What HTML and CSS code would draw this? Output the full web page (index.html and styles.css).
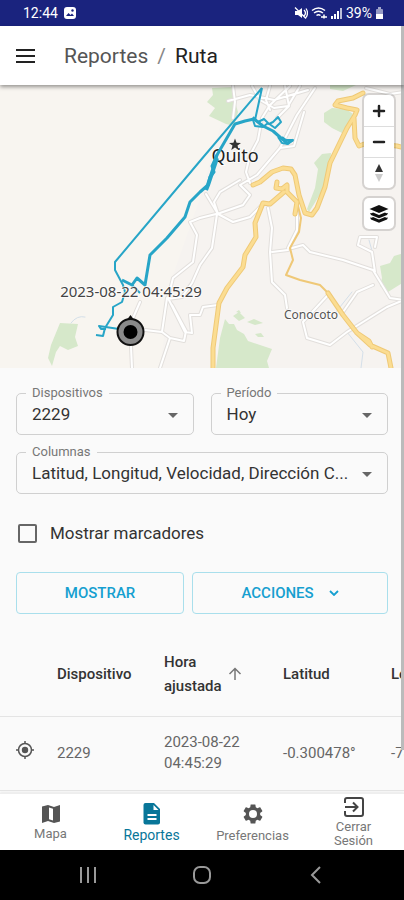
FILE: index.html
```html
<!DOCTYPE html>
<html lang="es">
<head>
<meta charset="utf-8">
<meta name="viewport" content="width=device-width, initial-scale=1">
<title>Reportes / Ruta</title>
<link rel="stylesheet" href="styles.css">
</head>
<body>
<div class="status">
  <span class="status-group">
    <span>12:44</span>
    <svg width="14" height="14" viewBox="0 0 14 14"><rect x="1" y="1" width="12" height="12" rx="3" fill="#fff"/><path d="M3 10l2.500-3 2 2 1.500-1.500 2 2.500z" fill="#1a237e"/><circle cx="9.500" cy="4.500" r="1.200" fill="#1a237e"/></svg>
  </span>
  <span class="status-group status-right">
    <svg width="14" height="14" viewBox="0 0 14 14" fill="#fff"><path d="M1 5h3l4-3v10L4 9H1z"/><path d="M10 4q3 3 0 6M12 2.500q3 4.500 0 9M1 1.500l11 11" stroke="#fff" fill="none" stroke-width="1.300"/></svg>
    <svg width="17" height="14" viewBox="0 0 17 14" fill="none" stroke="#fff" stroke-width="1.500"><path d="M1 4.500q6.500-5 13 0M3 7q4.500-3.500 9 0M5.500 9.500q2-1.500 4 0"/><path d="M10 11h6M13 8.500v4"/></svg>
    <svg width="12" height="14" viewBox="0 0 12 14" fill="#fff"><path d="M0 10h2v3H0zM3 8h2v5H3zM6 5h2v8H6z"/><path d="M9 2h2v11H9z" opacity=".7"/></svg>
    <span>39%</span>
    <svg width="9" height="14" viewBox="0 0 9 14" fill="#fff"><path d="M3 1h3v2H3z" opacity=".6"/><rect x="1" y="3" width="7" height="10" rx="1" opacity=".55"/><path d="M1 8h7v5H1z"/></svg>
  </span>
</div>

<header class="appbar">
  <button class="icon-button" aria-label="Menú"><svg width="20" height="16" viewBox="0 0 20 16"><path d="M0 2h19M0 8h19M0 14h19" stroke="#222" stroke-width="2"/></svg></button>
  <h1 class="crumbs"><a href="#">Reportes</a><span class="slash">/</span><span>Ruta</span></h1>
</header>

<main class="content">
  <section class="map">
    <svg class="map-canvas" viewBox="0 85 404 283" preserveAspectRatio="xMidYMid slice">
      <defs>
        <path id="streets" d="M233 86l2 16-2 16M290 86l-20 19-8 13-4 22-8 15-4 17 4 11M252 86l8 14 14 8 14-2 12-20M315 88l-18 27-17 33-23 27-17 10M270 86l-4 14 4 10M304 112l-10 34-14 2M285 86l4 20-12 12M228 101l22-6 24 5 34-10M366 88l24 6 14-2M240 180l-20 12-6 10 4 12 15 8 17-5 12-12M240 185l10 10-7 10-23 8-20 5-10 4 7 13-4 27-20 16-5 20 17 34 7 1-2-18 10 0 3-8 15-2M217 214l-5 34-12 17-8 18-10 14-14 2M206 194l12 20M167 298l-5 34-17-2M172 305l14 26-2 10-14-3-10 30M170 338l-8-6M140 302l-10 23 2 43M268 208l4 20-2 24 2 30 13 13 2 13M272 252l16-2M292 248l11-3 7 7 33 8 30 10 17 28 14 2M375 272l-3-20-14-7 2-8 17 0-2 10M373 285l-16 7-14 20M328 295l-25 27 4 16 23 7 17-13 40-25 17-7M297 204l0 26-9 18"/>
        <path id="highways" d="M253 185l7-3 12-10 11-4 8 1 4 6 4 20 6 18 7 2 5-7 8-21 5-24 17-35 8-13 2-5-10-2-12-3 3-4 15-3 10-5M354 118l1 20 4 8 8-3 30 3 8 2M277 182l-1 6 6 1 5-4 0 7 10 10-2 12M284 192l-14 12-7-1-8 20 1 14-11 18-2 12-16 21-8 15-6 45 0 20M328 293l15 22 14 18 13 12 18 8 3 15M357 333l12 8 3 6"/>
      </defs>
      <rect y="80" width="404" height="300" fill="#f8f5f0"/>
      <path d="M232 85h172v283H160l12-90 28-80z" fill="#f6f3f0"/>
      <g fill="#d6e8ca">
        <path d="M212 88l20-1 1 8 5 17-4 14-8-2-17-8 6-8-8-6 6-7z"/>
        <path d="M324 113l8-5 14 1 7 5-11 19-10-5-8-6z"/>
        <path d="M322 154l9-1-1 12-9 28-12 19-2-3 8-21 3-19-4-6z"/>
        <path d="M330 85h26l-13 6-13-2z"/>
        <path d="M225 319l4 5 5 0 3 6 7 4 4 7 24 8-5 12 2 7h-53l4-30z"/>
        <path d="M404 253l-10 3-4 7-10 3 2 12-2 8 8 6 16-10z"/>
        <path d="M60 323l18 1-3 13 3 9-10 4-8-4-4 6-4 14-4-8 3-13z"/>
        <path d="M233 316l6-4 6 6-6 3zM247 322l7-3 9 4-8 2zM255 334l6-1 3 4-6 0zM236 312l3-2 2 3z"/>
      </g>
      <g fill="none" stroke-linejoin="round" stroke-linecap="round">
        <path d="M71 323q6-8 14-6M352 292l-16 20M369 240l5 18M347 332l16 20-2 16" stroke="#d4dfe9"/>
        <use href="#streets" stroke="#e2dfdc" stroke-width="4"/>
        <use href="#streets" stroke="#fff" stroke-width="2"/>
        <path d="M297 202l4 16-2 14-9 16 3 12-7 15 14 5 20 5 8 8" stroke="#efc877" stroke-width="2"/>
        <use href="#highways" stroke="#efc977" stroke-width="5"/>
        <use href="#highways" stroke="#fbdd92" stroke-width="3"/>
      </g>
      <g class="map-label">
        <text x="235" y="162" text-anchor="middle" font-size="18" fill="#222">Quito</text>
        <text x="311" y="319" text-anchor="middle" font-size="12" fill="#555">Conocoto</text>
      </g>
      <path d="M235 138.500l1.600 4.200 4.400.2-3.500 2.700 1.200 4.400-3.700-2.500-3.700 2.500 1.200-4.400-3.500-2.700 4.400-.2z" fill="#333"/>
      <g fill="none" stroke="#27a5c7" stroke-width="2" stroke-linejoin="round">
        <path d="M262 88L200 161 115 262l0 8 8 15 2 7-3 10-9 5 0 8-8 13-2 8-7-1M119 329l-20-3 2 3 5 0M262 88l-7 32M140 293l-8-8"/>
        <path d="M253 117l5 5 6-3 5 5 4-2 5-5 3 5-6 6-7-5-5 4-8-1-2-6M282 137l4 3 7 0-5 4-6-1-4-6"/>
        <path d="M293 140l-6 3-6-5-8-7-10-5-9-7-9 2-10 3-18 31-4 13" stroke-width="3"/>
        <path d="M217 155l-5 11 2 6-4 5-2 8-8 7-10 10-5 15-18 21-17 17-5 30-8-7-5 7-10-5" stroke-width="3"/>
        <path d="M217 158l-4 12-5 15-2 5" stroke-width="4"/>
      </g>
      <text class="map-label" x="131" y="297" text-anchor="middle" font-size="15" fill="#444">2023-08-22 04:45:29</text>
      <path d="M127.500 319l3-4 3 4z" fill="#111"/>
      <circle cx="130.500" cy="332" r="13" fill="#8a8a8a" stroke="#111" stroke-width="2"/>
      <circle cx="130.500" cy="332" r="7" fill="#000"/>
    </svg>
    <div class="map-controls">
      <div class="control-group">
        <button aria-label="Acercar"><svg width="14" height="14" viewBox="0 0 14 14"><path d="M7 2v10M2 7h10" stroke="#222" stroke-width="2.500" stroke-linecap="round"/></svg></button>
        <button aria-label="Alejar"><svg width="14" height="14" viewBox="0 0 14 14"><path d="M2 7h10" stroke="#222" stroke-width="2.500" stroke-linecap="round"/></svg></button>
        <button aria-label="Norte"><svg width="10" height="20" viewBox="0 0 10 20"><path d="M5 1l4 8H1z" fill="#333"/><path d="M5 19l4-8H1z" fill="#ccc"/></svg></button>
      </div>
      <div class="control-group">
        <button aria-label="Capas"><svg width="20" height="20" viewBox="0 0 20 20" fill="#111"><path d="M10 1l9.500 4L10 9 .5 5z"/><path d="M1 9q2 .5 3-.5l6 2.500 6-2.500q1 1 3 .5l-1 2-8 3.200L2 11z"/><path d="M1 13.500q2 .5 3-.5l6 2.500 6-2.500q1 1 3 .5l-1 2-8 3.200-8-3.200z"/></svg></button>
      </div>
    </div>
  </section>

  <form class="filters">
    <div class="field">
      <label for="device">Dispositivos</label>
      <select id="device"><option>2229</option></select>
      <svg class="caret" width="10" height="5" viewBox="0 0 10 5"><path d="M0 0h10L5 5z"/></svg>
    </div>
    <div class="field">
      <label for="period">Período</label>
      <select id="period"><option>Hoy</option></select>
      <svg class="caret" width="10" height="5" viewBox="0 0 10 5"><path d="M0 0h10L5 5z"/></svg>
    </div>
    <div class="field wide">
      <label for="columns">Columnas</label>
      <select id="columns"><option>Latitud, Longitud, Velocidad, Dirección C...</option></select>
      <svg class="caret" width="10" height="5" viewBox="0 0 10 5"><path d="M0 0h10L5 5z"/></svg>
    </div>
    <div class="check wide">
      <input type="checkbox" id="markers"><label for="markers">Mostrar marcadores</label>
    </div>
    <div class="actions wide">
      <button type="button" class="show">Mostrar</button>
      <button type="button" class="more">Acciones <svg width="10" height="6" viewBox="0 0 10 6"><path d="M1 1l4 4 4-4" fill="none" stroke="#159fd0" stroke-width="1.800"/></svg></button>
    </div>
  </form>

  <div class="table-wrap">
    <table>
      <colgroup><col class="c-icon"><col class="c-device"><col class="c-time"><col class="c-lat"><col class="c-lon"></colgroup>
      <thead>
        <tr><th></th><th>Dispositivo</th><th><span class="sort"><span>Hora ajustada</span><svg width="14" height="14" viewBox="0 0 14 14"><path d="M7 13V2M1.500 7L7 1.500 12.500 7" fill="none" stroke="#777" stroke-width="1.500"/></svg></span></th><th>Latitud</th><th>Longitud</th></tr>
      </thead>
      <tbody>
        <tr><td class="target"><button class="icon-button" aria-label="Centrar"><svg width="20" height="20" viewBox="0 0 20 20"><circle cx="10" cy="10" r="6.500" fill="none" stroke="#555" stroke-width="1.500"/><circle cx="10" cy="10" r="3.200" fill="#555"/><path d="M10 1v3M10 16v3M1 10h3M16 10h3" stroke="#555" stroke-width="1.500"/></svg></button></td><td>2229</td><td>2023-08-22<br>04:45:29</td><td>-0.300478°</td><td>-78.48°</td></tr>
      </tbody>
    </table>
  </div>
  <div class="scroll-thumb"></div>
</main>

<nav class="tabs">
  <a href="#"><svg width="20" height="20" viewBox="0 0 20 20"><path d="M1 2.500L7 1l6 2 6-2v16.500L13 19l-6-2-6 2z" fill="#555"/><path d="M8 3.500l4 1.300v11.700l-4-1.300z" fill="#fff"/></svg><span>Mapa</span></a>
  <a href="#" class="active"><svg width="18" height="22" viewBox="0 0 18 22"><path d="M2.500 0H11l6 6v13.500q0 2-2 2H2.500q-2 0-2-2V2q0-2 2-2z" fill="#087699"/><path d="M10.500 2v5h5zM4.500 11h9v2h-9zM4.500 15h9v2h-9z" fill="#fff"/></svg><span>Reportes</span></a>
  <a href="#"><svg width="24" height="24" viewBox="0 0 24 24" fill="#555"><path d="M19.140 12.940c.04-.3.06-.61.06-.94s-.02-.64-.07-.94l2.030-1.580c.18-.14.23-.41.12-.61l-1.920-3.320c-.12-.22-.37-.29-.59-.22l-2.390.96c-.5-.38-1.030-.7-1.620-.94l-.36-2.540c-.04-.24-.24-.41-.48-.41h-3.840c-.24 0-.43.17-.47.41l-.36 2.540c-.59.24-1.130.57-1.620.94l-2.390-.96c-.22-.08-.47 0-.59.22L2.740 8.870c-.12.21-.08.47.12.61l2.030 1.580c-.05.3-.09.63-.09.94s.02.64.07.94l-2.030 1.580c-.18.14-.23.41-.12.61l1.920 3.320c.12.22.37.29.59.22l2.390-.96c.5.38 1.030.7 1.620.94l.36 2.540c.05.24.24.41.48.41h3.840c.24 0 .44-.17.47-.41l.36-2.540c.59-.24 1.130-.56 1.620-.94l2.390.96c.22.08.47 0 .59-.22l1.920-3.320c.12-.22.07-.47-.12-.61l-2.010-1.580zM12 16a4 4 0 1 1 0-8 4 4 0 0 1 0 8z"/></svg><span>Preferencias</span></a>
  <a href="#"><svg width="20" height="20" viewBox="0 0 20 20" fill="none" stroke="#444" stroke-width="2"><path d="M1 6V3q0-2 2-2h14q2 0 2 2v14q0 2-2 2H3q-2 0-2-2v-3M1 10h12M9 5.500l4.500 4.500L9 14.500"/></svg><span>Cerrar<br>Sesión</span></a>
</nav>

<div class="system">
  <button aria-label="Recientes"><svg width="20" height="20" viewBox="0 0 20 20"><path d="M3 2v16M10 2v16M17 2v16" stroke="#999" stroke-width="2"/></svg></button>
  <button aria-label="Inicio"><svg width="20" height="20" viewBox="0 0 20 20"><rect x="2" y="2" width="16" height="16" rx="6" fill="none" stroke="#999" stroke-width="2"/></svg></button>
  <button aria-label="Atrás"><svg width="20" height="20" viewBox="0 0 20 20"><path d="M14 2l-8 8 8 8" fill="none" stroke="#999" stroke-width="2"/></svg></button>
</div>
</body>
</html>
```
FILE: styles.css
```css
* { box-sizing: border-box; }
body {
  margin: 0;
  min-height: 100vh;
  display: flex;
  flex-direction: column;
  background: #fafafa;
  color: #333;
  font-family: Roboto, sans-serif;
  font-size: 17px;
}
button { padding: 0; border: 0; background: none; font: inherit; color: inherit; }
a { color: inherit; text-decoration: none; }
svg { display: block; flex: none; }

.status {
  display: flex;
  justify-content: space-between;
  align-items: center;
  height: 26px;
  padding: 0 20px 0 23px;
  background: #1a237e;
  color: #fff;
  font-size: 14px;
}
.status-group { display: flex; align-items: center; gap: 5px; }
.status-right { gap: 3px; }

.appbar {
  position: relative;
  z-index: 1;
  display: flex;
  align-items: center;
  gap: 28px;
  height: 59px;
  padding: 0 16px;
  border-right: 3px solid #bbb;
  background: #fff;
  box-shadow: 0 2px 4px #0006;
}
.crumbs { display: flex; gap: 9px; margin: 0; font-size: 21px; font-weight: 400; color: #222; }
.crumbs a { color: #555; }
.slash { color: #888; }

.content { position: relative; flex: 1; }
.map { position: relative; height: 283px; overflow: hidden; }
.map-canvas { width: 100%; height: 100%; }
.map-label { font-family: "Noto Sans", sans-serif; paint-order: stroke; stroke: #ffffffb0; stroke-width: 2px; }
.map-controls { position: absolute; top: 10px; right: 10px; display: grid; gap: 10px; }
.control-group { border-radius: 5px; background: #fff; box-shadow: 0 0 0 2px #0002; }
.control-group button { display: grid; place-items: center; width: 30px; height: 31px; }
.control-group button + button { border-top: 1px solid #ddd; }

.filters {
  display: grid;
  grid-template-columns: 1fr 1fr;
  gap: 17px;
  padding: 25px 16px 18px;
}
.wide { grid-column: 1 / -1; }
.field { position: relative; border: 1px solid #d0d0d0; border-radius: 5px; }
.field label {
  position: absolute;
  top: -8px;
  left: 9px;
  padding: 0 6px;
  background: #fafafa;
  color: #777;
  font-size: 13px;
  line-height: 14px;
}
.field select {
  display: block;
  width: 100%;
  height: 40px;
  padding: 0 30px 0 15px;
  border: 0;
  background: transparent;
  appearance: none;
  font: inherit;
  color: #333;
}
.caret { position: absolute; top: 19px; right: 15px; fill: #666; pointer-events: none; }
.check { display: flex; align-items: center; gap: 13px; height: 44px; }
.check input {
  appearance: none;
  width: 19px;
  height: 19px;
  margin: 0 0 0 2px;
  border: 2px solid #666;
  border-radius: 2px;
}
.actions { display: flex; gap: 8px; }
.actions button {
  display: flex;
  justify-content: center;
  align-items: center;
  gap: 15px;
  height: 42px;
  border: 1px solid #a9dfec;
  border-radius: 4px;
  color: #159fd0;
  font-size: 15px;
  font-weight: 500;
  text-transform: uppercase;
}
.show { flex: 6; }
.more { flex: 7; }

.table-wrap { overflow: hidden; }
table { width: 120%; min-width: 500px; table-layout: fixed; border-collapse: collapse; font-size: 15px; }
.c-icon { width: 42px; }
.c-device { width: 107px; }
.c-time { width: 119px; }
.c-lat { width: 108px; }
th, td { padding: 0 15px; text-align: left; border-bottom: 1px solid #e4e4e4; }
th { height: 84px; font-weight: 500; line-height: 24px; }
td { height: 74px; line-height: 21px; color: #666; }
.target { padding-right: 0; }
.sort { display: flex; align-items: center; gap: 6px; }
.sort span { width: min-content; }
.scroll-thumb { position: absolute; top: 0; right: 0; bottom: 43px; width: 3px; background: #bbb; }

.tabs {
  display: grid;
  grid-template-columns: repeat(4, 1fr);
  height: 57px;
  border-top: 1px solid #eee;
  background: #fff;
  box-shadow: 0 -1px 2px #0001;
  color: #777;
  font-size: 13px;
  line-height: 14px;
  text-align: center;
}
.tabs a { display: flex; flex-direction: column; align-items: center; justify-content: center; gap: 3px; }
.tabs .active { color: #087699; font-size: 14px; }
.system {
  display: grid;
  grid-template-columns: repeat(3, 114px);
  justify-content: center;
  height: 50px;
  background: #000;
}
.system button { display: grid; place-items: center; }
```
